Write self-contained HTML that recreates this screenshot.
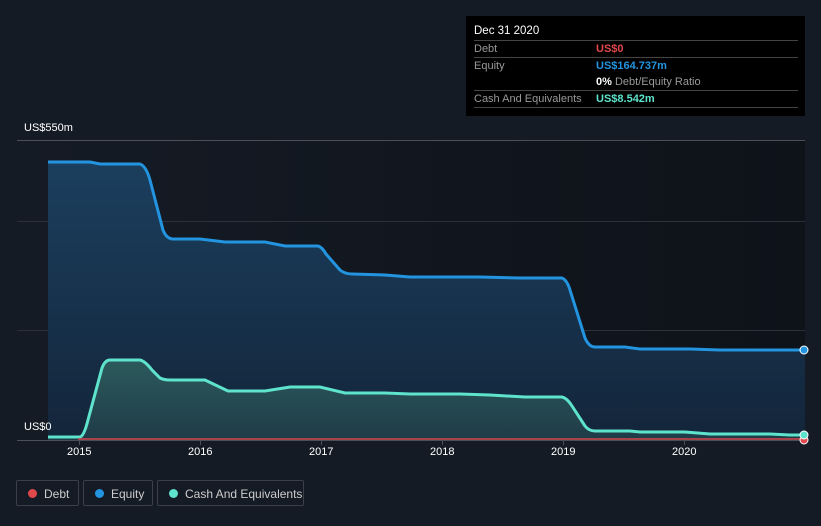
<!DOCTYPE html>
<html><head><style>
body{margin:0;width:821px;height:526px;background:#151b25;font-family:"Liberation Sans",sans-serif;overflow:hidden;position:relative}
.tt{position:absolute;left:466px;top:16px;width:339px;height:100px;background:#000;color:#fff;font-size:11px}
.tt .h{position:absolute;left:8px;top:9px;font-size:11.5px}
.tt .r{position:absolute;left:8px;width:324px;border-top:1px solid #444;height:17px;line-height:17px}
.tt .l{color:#999;position:absolute;left:0}
.tt .v{position:absolute;left:122px;font-weight:bold}
.leg{position:absolute;top:480px;height:26px;border:1px solid #3a3f48;border-radius:2px;color:#ccc;font-size:12px;line-height:26px;box-sizing:border-box}
.leg i{position:absolute;left:11px;top:8px;width:9px;height:9px;border-radius:50%}
.leg span{position:absolute;left:27px}
.ax{position:absolute;color:#fff;font-size:11px}
</style></head><body>
<svg width="821" height="526" style="position:absolute;left:0;top:0">
<defs>
<linearGradient id="bg" x1="0" x2="1"><stop offset="0" stop-color="#151b25"/><stop offset="1" stop-color="#0e1219"/></linearGradient>
<linearGradient id="eq" x1="0" y1="0" x2="0" y2="1"><stop offset="0" stop-color="#1b3f5e"/><stop offset="1" stop-color="#13253a"/></linearGradient>
<linearGradient id="ca" x1="0" y1="0" x2="0" y2="1"><stop offset="0" stop-color="#2b5a5c"/><stop offset="1" stop-color="#1f3b47"/></linearGradient>
</defs>
<rect x="17" y="140" width="788" height="300" fill="url(#bg)"/>
<line x1="17" y1="140.5" x2="805" y2="140.5" stroke="#4a4f58"/>
<line x1="17" y1="221.5" x2="805" y2="221.5" stroke="#2b3039"/>
<line x1="17" y1="330.5" x2="805" y2="330.5" stroke="#2b3039"/>
<path d="M48,162 L90,162 L100,164 L140,164 Q146,166 150,180 L163,230 Q166,238 172,239 L200,239 L225,242 L265,242 L285,246 L318,246 Q322,247 326,254 L340,270 Q345,274 352,274 L385,275 L410,277 L480,277 L520,278 L562,278 Q567,280 570,290 L585,338 Q589,347 595,347 L625,347 L640,349 L690,349 L720,350 L805,350 L805,440 L48,440Z" fill="url(#eq)"/>
<path d="M48,437 L80,437 Q84,436 88,420 L102,368 Q105,360 110,360 L140,360 Q145,361 152,370 L160,378 Q164,380 170,380 L205,380 L228,391 L265,391 L290,387 L320,387 L345,393 L385,393 L410,394 L460,394 L490,395 L525,397 L562,397 Q567,398 572,406 L585,426 Q589,431 595,431 L630,431 L640,432 L685,432 L710,434 L770,434 L790,435 L805,435 L805,440 L48,440Z" fill="url(#ca)"/>
<path d="M48,162 L90,162 L100,164 L140,164 Q146,166 150,180 L163,230 Q166,238 172,239 L200,239 L225,242 L265,242 L285,246 L318,246 Q322,247 326,254 L340,270 Q345,274 352,274 L385,275 L410,277 L480,277 L520,278 L562,278 Q567,280 570,290 L585,338 Q589,347 595,347 L625,347 L640,349 L690,349 L720,350 L805,350" fill="none" stroke="#2394df" stroke-width="3"/>
<path d="M48,437 L80,437 Q84,436 88,420 L102,368 Q105,360 110,360 L140,360 Q145,361 152,370 L160,378 Q164,380 170,380 L205,380 L228,391 L265,391 L290,387 L320,387 L345,393 L385,393 L410,394 L460,394 L490,395 L525,397 L562,397 Q567,398 572,406 L585,426 Q589,431 595,431 L630,431 L640,432 L685,432 L710,434 L770,434 L790,435 L805,435" fill="none" stroke="#5ee3cc" stroke-width="3"/>
<line x1="17" y1="440.5" x2="805" y2="440.5" stroke="#4a4f58"/>
<line x1="78" y1="439" x2="805" y2="439" stroke="#e0484c" stroke-width="2" opacity="0.7"/>
<g stroke="#4a4f58"><line x1="79.5" y1="440" x2="79.5" y2="445"/><line x1="200.5" y1="440" x2="200.5" y2="445"/><line x1="321.5" y1="440" x2="321.5" y2="445"/><line x1="442.5" y1="440" x2="442.5" y2="445"/><line x1="563.5" y1="440" x2="563.5" y2="445"/><line x1="684.5" y1="440" x2="684.5" y2="445"/></g>
<circle cx="804" cy="440" r="4" fill="#e0484c" stroke="#fff"/>
<circle cx="804" cy="435" r="4" fill="#5ee3cc" stroke="#fff"/>
<circle cx="804" cy="350" r="4" fill="#2394df" stroke="#fff"/>
</svg>
<div class="ax" style="left:24px;top:122px">US$550m</div>
<div class="ax" style="left:24px;top:421px">US$0</div>
<div class="ax" style="left:67px;top:446px">2015</div>
<div class="ax" style="left:188px;top:446px">2016</div>
<div class="ax" style="left:309px;top:446px">2017</div>
<div class="ax" style="left:430px;top:446px">2018</div>
<div class="ax" style="left:551px;top:446px">2019</div>
<div class="ax" style="left:672px;top:446px">2020</div>
<div class="tt">
<div class="h">Dec 31 2020</div>
<div class="r" style="top:24px"><span class="l">Debt</span><span class="v" style="color:#e0484c">US$0</span></div>
<div class="r" style="top:41px"><span class="l">Equity</span><span class="v" style="color:#2394df">US$164.737m</span></div>
<div class="r" style="top:58px;border-top:none"><span class="v" style="color:#fff">0% <span style="color:#999;font-weight:normal">Debt/Equity Ratio</span></span></div>
<div class="r" style="top:74px"><span class="l">Cash And Equivalents</span><span class="v" style="color:#5ee3cc">US$8.542m</span></div>
<div class="r" style="top:91px;height:0"></div>
</div>
<div class="leg" style="left:16px;width:63px"><i style="background:#e0484c"></i><span>Debt</span></div>
<div class="leg" style="left:83px;width:70px"><i style="background:#2394df"></i><span>Equity</span></div>
<div class="leg" style="left:157px;width:147px"><i style="background:#5ee3cc"></i><span>Cash And Equivalents</span></div>
</body></html>
